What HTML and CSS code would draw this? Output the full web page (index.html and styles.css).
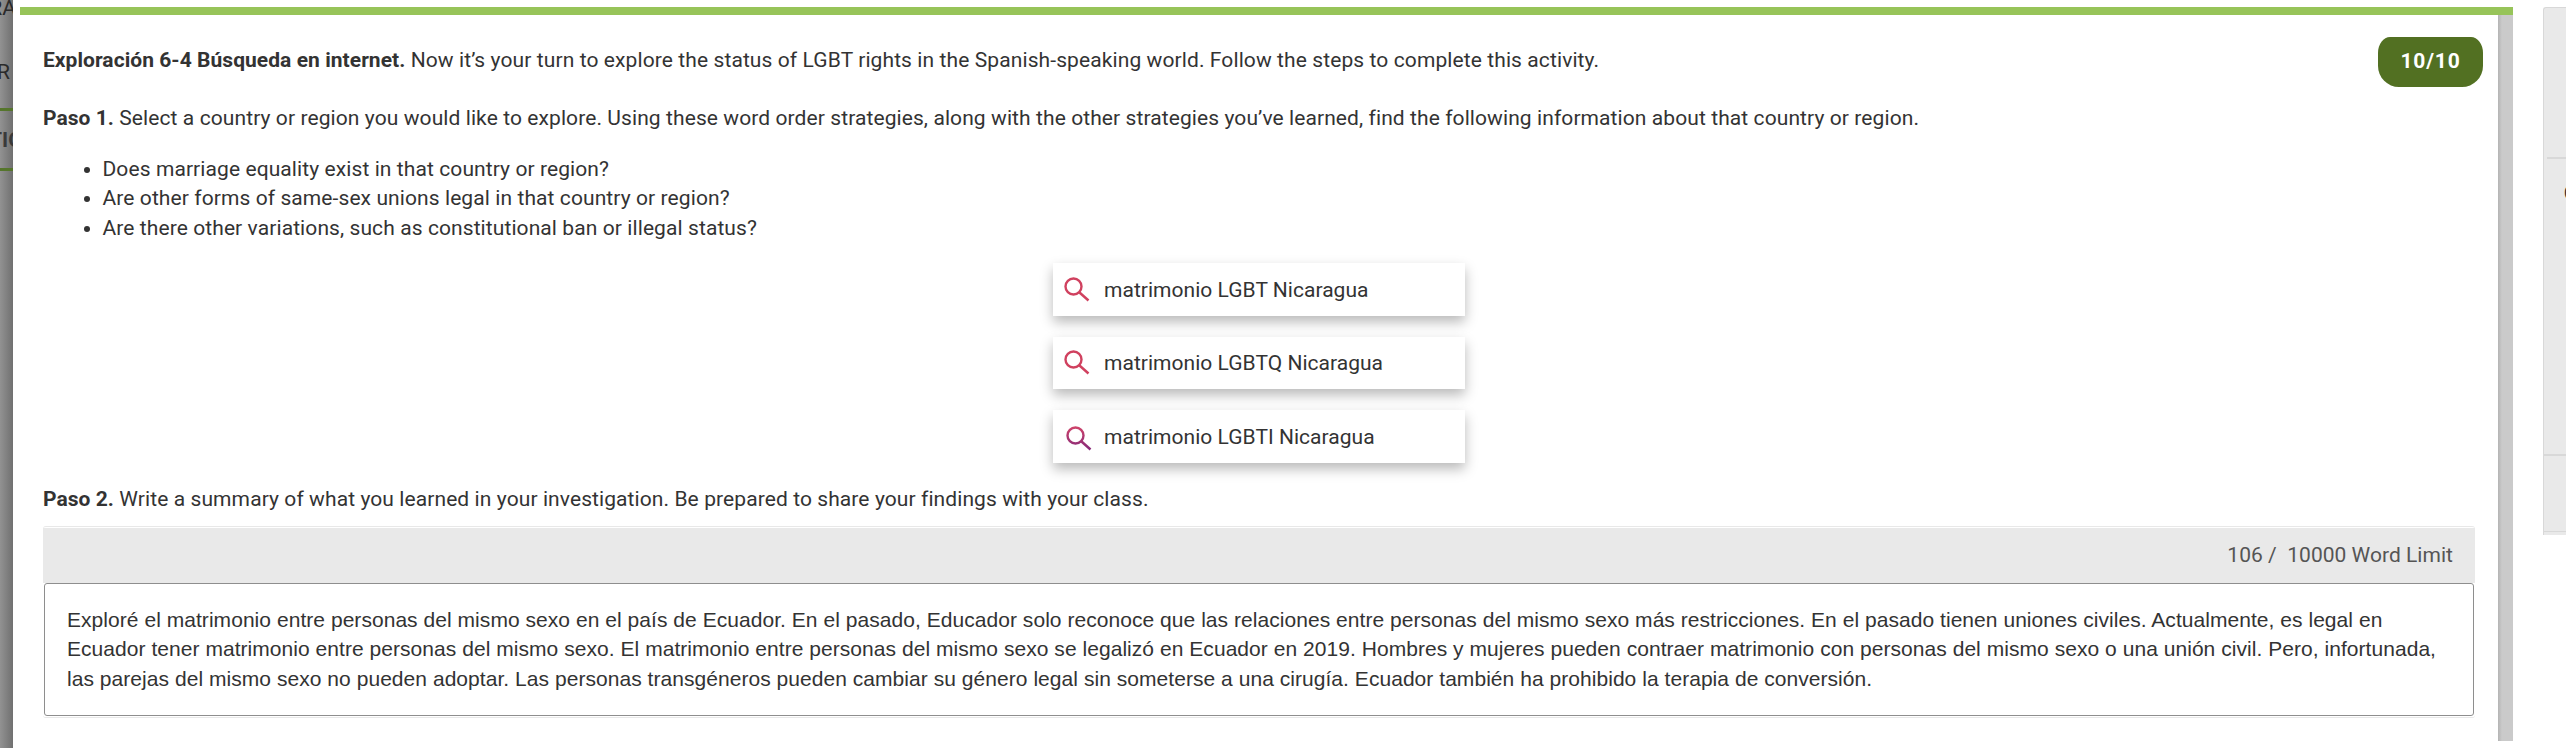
FILE: index.html
```html
<!DOCTYPE html>
<html lang="en">
<head>
    <meta charset="UTF-8">
    <meta name="viewport" content="width=device-width, initial-scale=1.0">
    <title>Exploración 6-4</title>
    <link rel="stylesheet" href="styles.css">
</head>
<body>
    <div class="page">
        <aside class="backdrop">
            <div class="backdrop-text first">RA</div>
            <div class="backdrop-text second">R</div>
            <div class="backdrop-tab">TIO</div>
        </aside>

        <main class="modal">
            <div class="top-bar"></div>
            <div class="modal-body">
                <section class="activity">
                    <div class="intro">
                        <p><b>Exploración 6-4 Búsqueda en internet.</b> Now it’s your turn to explore the status of LGBT rights in the Spanish-speaking world. Follow the steps to complete this activity.</p>
                        <span class="score">10/10</span>
                    </div>
                    <p class="step-one"><b>Paso 1.</b> Select a country or region you would like to explore. Using these word order strategies, along with the other strategies you’ve learned, find the following information about that country or region.</p>
                    <ul class="questions">
                        <li>Does marriage equality exist in that country or region?</li>
                        <li>Are other forms of same-sex unions legal in that country or region?</li>
                        <li>Are there other variations, such as constitutional ban or illegal status?</li>
                    </ul>

                    <div class="searches">
                        <div class="search-card">
                            <svg class="search-icon" viewBox="0 0 26 26"><circle cx="9.5" cy="9.5" r="8"/><path d="M15.5 15.5L24.5 23.5"/></svg>
                            <span>matrimonio LGBT Nicaragua</span>
                        </div>
                        <div class="search-card middle">
                            <svg class="search-icon" viewBox="0 0 26 26"><circle cx="9.5" cy="9.5" r="8"/><path d="M15.5 15.5L24.5 23.5"/></svg>
                            <span>matrimonio LGBTQ Nicaragua</span>
                        </div>
                        <div class="search-card last">
                            <svg class="search-icon" viewBox="0 0 26 26">
                                <defs>
                                    <linearGradient id="pinkPurple" gradientUnits="userSpaceOnUse" x1="0" y1="0" x2="0" y2="25">
                                        <stop offset="0" stop-color="#d0446a"/>
                                        <stop offset="1" stop-color="#82287a"/>
                                    </linearGradient>
                                </defs>
                                <circle cx="9.5" cy="9.5" r="8"/><path d="M15.5 15.5L24.5 23.5"/>
                            </svg>
                            <span>matrimonio LGBTI Nicaragua</span>
                        </div>
                    </div>

                    <p class="step-two"><b>Paso 2.</b> Write a summary of what you learned in your investigation. Be prepared to share your findings with your class.</p>

                    <div class="editor">
                        <div class="editor-bar">106 /&nbsp; 10000 Word Limit</div>
                        <div class="answer">
                            Exploré el matrimonio entre personas del mismo sexo en el país de Ecuador. En el pasado, Educador solo reconoce que las relaciones entre personas del mismo sexo más restricciones. En el pasado tienen uniones civiles. Actualmente, es legal en<br>
                            Ecuador tener matrimonio entre personas del mismo sexo. El matrimonio entre personas del mismo sexo se legalizó en Ecuador en 2019. Hombres y mujeres pueden contraer matrimonio con personas del mismo sexo o una unión civil. Pero, infortunada,<br>
                            las parejas del mismo sexo no pueden adoptar. Las personas transgéneros pueden cambiar su género legal sin someterse a una cirugía. Ecuador también ha prohibido la terapia de conversión.
                        </div>
                    </div>
                </section>
                <div class="gutter"></div>
            </div>
        </main>

        <aside class="side-panel">
            <div class="side-top"></div>
            <div class="side-item">C</div>
            <div class="side-bottom"></div>
        </aside>
    </div>
</body>
</html>
```
FILE: styles.css
```css
* {
    box-sizing: border-box;
}

body {
    margin: 0;
    background: #fff;
    color: #333;
    font-family: Roboto, sans-serif;
    font-size: 21px;
    line-height: 29.4px;
    letter-spacing: 0.09px;
}

p, ul {
    margin: 0;
}

b {
    letter-spacing: 0.05px;
}

.page {
    display: flex;
    height: 748px;
    overflow: hidden;
}

.backdrop {
    width: 13px;
    flex-shrink: 0;
    overflow: hidden;
    background: linear-gradient(to right, #929292, #707070);
    color: #2a2a2a;
    letter-spacing: 0;
}

.backdrop-text {
    display: flex;
    justify-content: flex-end;
}

.backdrop-text.first {
    height: 64px;
    margin: -6px -3px 0 0;
}

.backdrop-text.second {
    height: 50px;
    padding-right: 3px;
}

.backdrop-tab {
    height: 63px;
    padding-top: 15px;
    border-top: 3px solid #55752c;
    border-bottom: 3px solid #55752c;
    color: #3a3a3a;
    font-weight: bold;
    text-indent: -11px;
}

.modal {
    width: 2500px;
    flex-shrink: 0;
    padding-top: 7px;
}

.top-bar {
    height: 8px;
    margin-left: 7px;
    background: #97c459;
}

.modal-body {
    display: flex;
}

.activity {
    flex: 1;
    min-width: 0;
    height: 733px;
    padding: 22px 23px 0 30px;
}

.intro {
    display: flex;
    justify-content: space-between;
    height: 67px;
    margin-right: -8px;
}

.intro p {
    padding-top: 9px;
    letter-spacing: 0.1px;
}

.score {
    width: 105px;
    height: 50px;
    background: #527022;
    border-radius: 12px 12px 21px 21px / 16px 16px 21px 21px;
    color: #fff;
    font-weight: bold;
    line-height: 48px;
    text-align: center;
    letter-spacing: 0.8px;
}

.step-one {
    height: 51px;
}

.questions {
    height: 108px;
    padding-left: 59.5px;
}

.searches {
    width: 412px;
    margin: 0 auto;
    display: flex;
    flex-direction: column;
    gap: 21px;
}

.search-card {
    display: flex;
    align-items: center;
    height: 53px;
    padding-left: 11px;
    box-shadow: 0 6px 12px rgba(0, 0, 0, 0.28);
    background: #fff;
    letter-spacing: 0.03px;
}

.search-card.middle {
    height: 52px;
}

.search-card span {
    margin-left: 14px;
    padding-top: 2px;
}

.search-icon {
    width: 26px;
    height: 26px;
    fill: none;
    stroke: #d0415f;
    stroke-width: 2.4;
}

.last .search-icon {
    margin: 4px -2px 0 2px;
    stroke: url(#pinkPurple);
}

.step-two {
    height: 41px;
    margin-top: 22px;
}

.editor {
    height: 192px;
    border: 1px solid #e8e8e8;
    border-width: 1px 0;
    border-radius: 3px;
    padding-top: 1px;
}

.editor-bar {
    height: 55px;
    padding: 13px 22px 0 0;
    background: #e9e9e9;
    color: #555;
    text-align: right;
    letter-spacing: 0.03px;
}

.answer {
    height: 133px;
    margin: 0 1px;
    padding: 21px 22px 0;
    border: 1px solid #8e8e8e;
    border-radius: 3px;
    font-family: "Liberation Sans", sans-serif;
    letter-spacing: 0.046px;
    white-space: nowrap;
}

.gutter {
    width: 15px;
    height: 726px;
    background: linear-gradient(to right, #b4b4b4, #cacaca 4px);
}

.side-panel {
    flex: 1;
    height: 528px;
    margin: 7px 0 0 30px;
    background: #e9e9e9;
    border: 1px solid #d8d8d8;
    border-width: 1px 0 0 1px;
    border-radius: 3px 0 0 0;
    overflow: hidden;
}

.side-top {
    height: 151px;
    margin-left: 3px;
    border-bottom: 2px solid #d8d8d8;
}

.side-item {
    height: 295px;
    padding: 20px 0 0 20px;
    font-weight: bold;
}

.side-bottom {
    height: 78px;
    border: 2px solid #d8d8d8;
    border-width: 2px 0 1px;
}
```
